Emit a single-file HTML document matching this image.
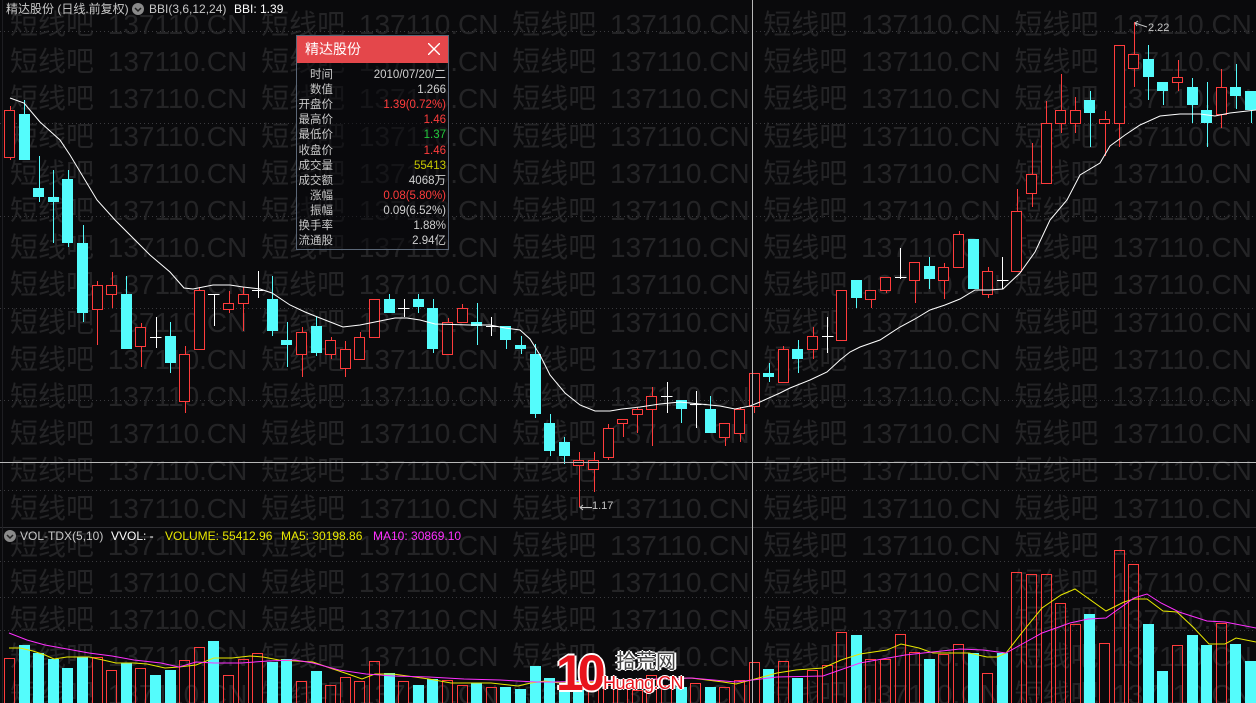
<!DOCTYPE html>
<html><head><meta charset="utf-8">
<style>
html,body{margin:0;padding:0;background:#0a0a0c;width:1256px;height:703px;overflow:hidden;font-family:"Liberation Sans","Noto Sans CJK SC",sans-serif;}
#wrap{position:relative;width:1256px;height:703px;}
.wm{position:absolute;left:10px;white-space:pre;font-size:28px;color:#242426;line-height:30px;word-spacing:6px;font-family:"Liberation Sans","Noto Sans CJK SC",sans-serif;}
.hdr{position:absolute;font-size:12px;white-space:pre;line-height:14px;}
#tip{position:absolute;left:296px;top:35px;width:151px;height:213px;border:1px solid #5a6676;background:rgba(10,10,12,0.55);}
#tip .t{height:27px;background:#e4474b;color:#fff;font-size:14px;line-height:27px;padding-left:8px;position:relative;}
#tip .row{position:absolute;font-size:11.5px;line-height:14px;white-space:pre;}
</style></head><body><div id="wrap">
<div id="wms"></div>
<svg id="chart" width="1256" height="703" style="position:absolute;left:0;top:0"></svg>
<div class="hdr" style="left:6px;top:2px;color:#c8c8c8">精达股份 (日线.前复权)</div>
<svg style="position:absolute;left:132px;top:3px" width="12" height="12"><circle cx="6" cy="6" r="6" fill="#8a8a8a"/><path d="M3 5 L6 8 L9 5" stroke="#222" stroke-width="1.5" fill="none"/></svg>
<div class="hdr" style="left:149px;top:2px;color:#c8c8c8">BBI(3,6,12,24)</div>
<div class="hdr" style="left:234px;top:2px;color:#ffffff">BBI: 1.39</div>
<svg style="position:absolute;left:4px;top:530px" width="12" height="12"><circle cx="6" cy="6" r="6" fill="#8a8a8a"/><path d="M3 5 L6 8 L9 5" stroke="#222" stroke-width="1.5" fill="none"/></svg>
<div class="hdr" style="left:20px;top:529px;color:#c8c8c8">VOL-TDX(5,10)</div>
<div class="hdr" style="left:111px;top:529px;color:#ffffff">VVOL: -</div>
<div class="hdr" style="left:165px;top:529px;color:#e8e800">VOLUME: 55412.96</div>
<div class="hdr" style="left:281px;top:529px;color:#e8e800">MA5: 30198.86</div>
<div class="hdr" style="left:373px;top:529px;color:#ff30ff">MA10: 30869.10</div>
<div id="tip"><div class="t">精达股份<svg style="position:absolute;right:8px;top:7px" width="12" height="12"><path d="M0 0L12 12M12 0L0 12" stroke="#fff" stroke-width="1.4"/></svg></div></div>
<div style="position:absolute;left:592px;top:500px;color:#c8c8c8;font-size:11px">1.17</div>
<div style="position:absolute;left:1148px;top:22px;color:#c8c8c8;font-size:11px">2.22</div>
<div style="position:absolute;left:556px;top:645px;font-size:50px;font-weight:bold;color:#e8141c;letter-spacing:-6px;font-family:'Liberation Sans',sans-serif;text-shadow:2px 0 #fff,-2px 0 #fff,0 2px #fff,0 -2px #fff;line-height:56px">10</div>
<div style="position:absolute;left:616px;top:648px;font-size:20px;color:#444;text-shadow:1px 0 #fff,-1px 0 #fff,0 1px #fff,0 -1px #fff,2px 0 #fff,-2px 0 #fff;line-height:24px;font-family:'Noto Sans CJK SC',sans-serif">拾荒网</div>
<div style="position:absolute;left:603px;top:672px;font-size:18px;color:#e8141c;text-shadow:1px 0 #fff,-1px 0 #fff,0 1px #fff,0 -1px #fff,2px 0 #fff,-2px 0 #fff;line-height:22px;letter-spacing:-0.5px">Huang.CN</div>
</div>
<script>
var wm=document.getElementById('wms'),s='';
var str='短线吧 137110.CN 短线吧 137110.CN 短线吧 137110.CN 短线吧 137110.CN 短线吧 137110.CN';
for(var k=0;k<19;k++){s+='<div class="wm" style="top:'+(26+37.2*k-16)+'px">'+str+'</div>';}
wm.innerHTML=s;
var C=[[106,110,157,160,'r'],[100,114,160,160,'c'],[156,188,197,202,'c'],[170,197,202,243,'c'],[170,179,243,247,'c'],[225,243,313,322,'c'],[281,285,309,345,'r'],[272,285,294,308,'r'],[276,294,349,349,'c'],[323,327,346,367,'r'],[317,337,337,348,'w'],[322,336,363,373,'c'],[346,354,401,413,'r'],[287,290,349,349,'r'],[294,294,294,326,'w'],[291,303,309,313,'r'],[287,294,303,331,'r'],[271,290,290,298,'w'],[276,299,331,336,'c'],[322,340,345,367,'c'],[327,332,354,377,'r'],[317,326,353,356,'c'],[337,340,354,359,'r'],[341,349,368,377,'r'],[332,337,359,359,'r'],[299,299,337,337,'r'],[294,299,313,313,'c'],[299,308,308,317,'w'],[294,299,307,313,'c'],[299,308,349,353,'c'],[318,322,354,354,'r'],[304,308,322,322,'r'],[303,322,326,345,'c'],[317,326,326,336,'w'],[326,326,340,349,'c'],[336,345,349,354,'c'],[344,354,414,418,'c'],[414,423,451,456,'c'],[437,442,456,464,'c'],[452,460,465,507,'r'],[452,460,469,492,'r'],[424,428,457,460,'r'],[419,419,423,437,'r'],[407,409,414,433,'r'],[387,396,409,446,'r'],[382,396,396,413,'w'],[400,400,409,423,'c'],[391,404,404,428,'w'],[396,409,433,433,'c'],[423,423,437,446,'r'],[407,409,433,442,'r'],[373,373,406,413,'r'],[363,373,377,382,'c'],[346,349,382,382,'r'],[340,349,359,373,'c'],[327,336,349,359,'r'],[317,336,336,353,'w'],[290,290,340,340,'r'],[280,280,298,308,'c'],[290,290,299,308,'r'],[277,277,290,293,'r'],[248,277,277,279,'w'],[262,262,280,303,'r'],[257,266,279,289,'c'],[263,267,280,299,'r'],[231,234,267,267,'r'],[239,239,289,289,'c'],[267,271,294,298,'r'],[257,280,280,289,'w'],[189,211,271,271,'r'],[143,174,193,207,'r'],[101,123,183,183,'r'],[74,110,123,133,'r'],[97,110,123,133,'r'],[91,100,113,147,'c'],[111,119,123,156,'r'],[45,45,123,147,'r'],[22,54,68,87,'r'],[45,59,77,100,'c'],[82,82,91,105,'c'],[60,77,82,91,'r'],[78,87,105,123,'c'],[82,110,123,147,'c'],[69,87,114,128,'r'],[64,87,96,109,'c'],[91,91,110,123,'c']];
var V=[658,645,653,659,668,657,657,670,663,668,675,670,660,647,641,675,659,653,662,659,681,671,685,677,681,661,673,681,685,679,680,685,683,687,687,689,666,678,687,680,682,685,688,690,675,685,687,683,687,687,680,662,669,661,678,670,665,632,635,659,659,634,652,659,654,644,653,673,653,572,574,574,603,624,614,643,550,564,624,671,645,635,645,623,644,661];
var VC='rcccccrrcrccrrcrrrccrcrrrrcrccrrcrccccccrrrrrrcrcrrrcrcrrrcrrrrcrrcrcrrrrrcrrrccrccrcc';
var R='#ff3c3c',CY='#54fcfc',W='#ffffff';
var g='';
[31,123,216,308,400,490,561,597,630].forEach(function(y){g+='<line x1="0" y1="'+y+'.5" x2="1256" y2="'+y+'.5" stroke="#3a3a3e" stroke-dasharray="1,3"/>';});
g+='<line x1="0" y1="527.5" x2="1256" y2="527.5" stroke="#2e2e32"/>';
g+='<line x1="2.5" y1="0" x2="2.5" y2="703" stroke="#1e1e22"/>';
for(var i=0;i<C.length;i++){var c=C[i],x=9.5+i*14.6,col=c[4]=='r'?R:(c[4]=='c'?CY:W);
 var xl=Math.round(x-5.5)+0.5,xc=Math.round(x)+0.5;
 g+='<line x1="'+xc+'" y1="'+c[0]+'" x2="'+xc+'" y2="'+c[3]+'" stroke="'+col+'" stroke-width="1"/>';
 if(c[4]=='w'){g+='<line x1="'+(xl-0.5)+'" y1="'+(c[1]+0.5)+'" x2="'+(xl+11)+'" y2="'+(c[1]+0.5)+'" stroke="#fff"/>';}
 else if(c[4]=='r'){var h=Math.max(c[2]-c[1],2);g+='<rect x="'+xl+'" y="'+(c[1]+0.5)+'" width="10" height="'+h+'" fill="#0a0a0c" stroke="'+R+'"/>';}
 else{var h2=Math.max(c[2]-c[1],3);g+='<rect x="'+(xl-0.5)+'" y="'+c[1]+'" width="11" height="'+h2+'" fill="'+CY+'"/>';}
 var vt=V[i],vc=VC[i]=='r';
 if(vc)g+='<rect x="'+xl+'" y="'+(vt+0.5)+'" width="10" height="'+(703-vt)+'" fill="none" stroke="'+R+'"/>';
 else g+='<rect x="'+(xl-0.5)+'" y="'+vt+'" width="11" height="'+(703-vt)+'" fill="'+CY+'"/>';
}
var bbi='10,98 24,103 40,122 60,140 70,155 85,180 97,200 115,220 130,235 150,255 170,272 184,288 193,289 213,285 230,285 243,287 260,289 272,293 290,305 305,312 320,318 343,327 360,325 380,321 395,318 407,318 420,320 435,324 470,325 490,325 505,328 520,330 530,339 540,355 550,375 565,393 580,405 595,411 610,411 622,409 640,407 660,404 680,402 700,404 720,406 735,409 750,406 760,402 780,393 790,388 810,380 827,372 840,360 850,352 860,347 880,340 900,327 915,319 930,310 945,305 960,299 975,290 990,290 1003,289 1020,273 1035,252 1050,220 1067,200 1080,175 1100,163 1110,146 1125,135 1140,125 1160,116 1180,114 1200,114 1215,116 1230,113 1256,110';
g+='<polyline points="'+bbi+'" fill="none" stroke="#fff" stroke-width="1"/>';
var ma5='9,648 20,648 33,651 45,655 54,659 67,657 89,657 103,660 116,663 134,663 147,664 165,668 179,667 196,665 214,658 232,658 250,656 263,657 279,660 313,662 330,668 348,674 362,679 375,674 393,674 429,679 451,683 473,683 491,683 509,685 518,686 531,683 545,681 560,683 691,678 723,682 736,684 755,679 777,673 796,670 823,668 841,660 860,654 887,650 901,644 919,648 933,653 951,653 969,653 987,657 997,657 1006,653 1024,630 1042,608 1061,595 1075,589 1106,611 1124,602 1134,599 1147,599 1163,611 1177,612 1193,627 1209,644 1225,644 1236,638 1256,642';
var ma10='9,633 27,640 45,645 67,649 89,653 112,656 134,660 161,663 179,667 196,662 214,663 241,663 268,661 295,660 313,663 339,670 366,674 393,676 429,677 464,679 500,680 536,682 554,682 691,678 736,682 777,677 823,676 860,663 905,655 960,649 983,650 1006,653 1024,643 1042,633 1070,623 1088,619 1106,618 1134,598 1147,594 1161,603 1179,612 1207,621 1225,622 1256,628';
g+='<polyline points="'+ma5+'" fill="none" stroke="#e8e800" stroke-width="1"/>';
g+='<polyline points="'+ma10+'" fill="none" stroke="#ff30ff" stroke-width="1"/>';
g+='<line x1="752.5" y1="0" x2="752.5" y2="703" stroke="#b8b8b8"/>';
g+='<line x1="0" y1="462.5" x2="1256" y2="462.5" stroke="#b8b8b8"/>';
g+='<path d="M580 507.5H592M583 505L580 507.5L583 510" stroke="#c8c8c8" fill="none"/>';
g+='<path d="M1135 23L1147 27M1135 23L1138 21M1135 23L1137 26" stroke="#c8c8c8" fill="none"/>';
document.getElementById('chart').innerHTML=g;
var tip=document.getElementById('tip');
var rows=[['时间','2010/07/20/二','#d0d0d0'],['数值','1.266','#d0d0d0'],['开盘价','1.39(0.72%)','#ff3c3c'],['最高价','1.46','#ff3c3c'],['最低价','1.37','#22c83c'],['收盘价','1.46','#ff3c3c'],['成交量','55413','#c8c800'],['成交额','4068万','#d0d0d0'],['涨幅','0.08(5.80%)','#ff3c3c'],['振幅','0.09(6.52%)','#d0d0d0'],['换手率','1.88%','#d0d0d0'],['流通股','2.94亿','#d0d0d0']];
var h='';
rows.forEach(function(r,i){var t=32+i*15.1;h+='<div class="row" style="right:115px;top:'+t+'px;color:#c8c8c8">'+r[0]+'</div><div class="row" style="right:2px;top:'+t+'px;color:'+r[2]+'">'+r[1]+'</div>';});
tip.insertAdjacentHTML('beforeend',h);
</script>
</body></html>
